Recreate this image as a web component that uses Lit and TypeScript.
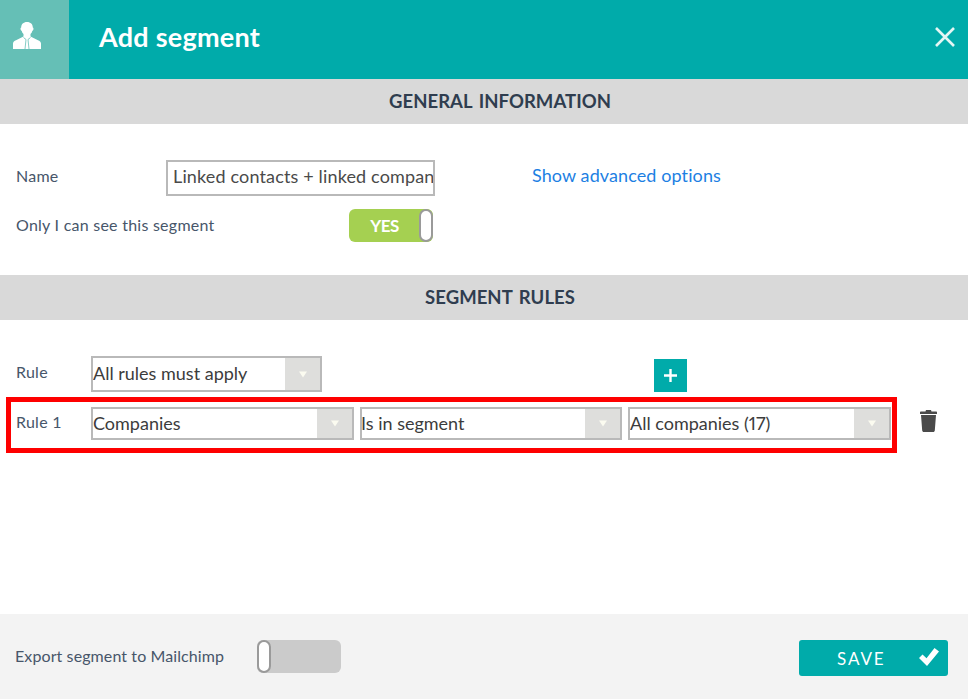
import { LitElement, html, css } from "lit";
import { customElement } from "lit/decorators.js";

const caret = html`<svg class="caret" width="8" height="7" viewBox="0 0 8 7"><path d="M0 0.5h8L4 6.5z" fill="#fbfbf0"/></svg>`;

@customElement("app-root")
export class AppRoot extends LitElement {
  static styles = css`
    :host { display: block; width: 968px; height: 699px; background: #fff; font-family: "Lato", "Open Sans", sans-serif; color: #3f4a5a; overflow: hidden; }
    * { box-sizing: border-box; }
    .page { display: flex; flex-direction: column; height: 699px; }
    .head { flex: none; height: 79px; background: #00abaa; display: flex; align-items: center; color: #fff; }
    .tile { width: 69px; height: 79px; background: #65bfb6; display: flex; align-items: center; padding: 0 0 8px 13px; }
    .tile svg { display: block; }
    .head h1 { margin: 0 0 6px 30px; font-size: 27px; line-height: 34px; font-weight: 700; flex: 1; letter-spacing: 0.25px; }
    .close { margin: 0 12px 6px 0; display: block; }
    .band { flex: none; height: 45px; background: #d9d9d9; display: flex; align-items: center; justify-content: center; padding: 0 0 2px 32px; font-size: 18.5px; font-weight: 700; color: #2f3d4f; letter-spacing: 0.05px; word-spacing: 2px; }
    .general { flex: none; height: 151px; padding: 36px 0 0 16px; }
    .line { display: flex; align-items: center; }
    .lab { font-size: 16px; color: #47566a; letter-spacing: 0.25px; }
    .name-lab { width: 150px; padding-bottom: 6px; }
    .input { width: 269px; height: 36px; border: 2px solid #b9b9b9; font-size: 18px; letter-spacing: 0.15px; color: #4a4a4a; padding: 0 0 0 5px; line-height: 28px; white-space: nowrap; overflow: hidden; }
    .link { margin-left: 97px; padding-bottom: 7px; font-size: 18px; letter-spacing: 0.1px; color: #1d7fe3; text-decoration: none; }
    .only { margin-top: 13px; }
    .only-lab { width: 333px; padding-bottom: 2px; }
    .toggle { width: 84px; height: 33px; border-radius: 6px; display: flex; align-items: center; flex: none; }
    .toggle.on { background: #a5d051; color: #fff; font-weight: 700; font-size: 17px; }
    .toggle.on span { flex: 1; text-align: center; letter-spacing: -0.5px; padding-left: 1px; }
    .toggle.off { background: #cbcbcb; }
    .knob { width: 14px; height: 33px; background: #fff; border: 2px solid #9a9a9a; border-radius: 7px; flex: none; }
    .rules { flex: 1; padding: 36px 0 0 6px; }
    .rule-top { display: flex; align-items: flex-start; padding-left: 10px; }
    .rule-lab { width: 75px; padding-top: 6px; }
    .sel { height: 36px; border: 2px solid #b9b9b9; display: flex; align-items: stretch; background: #fff; font-size: 18px; color: #3c3c3c; font-variant-numeric: proportional-nums; }
    .sel .txt { flex: 1; line-height: 30px; white-space: nowrap; overflow: hidden; }
    .sel .arrow { width: 35px; background: #dededc; display: flex; align-items: center; justify-content: center; flex: none; }
    .sel.top { width: 231px; }
    .plus { width: 33px; height: 33px; margin: 3px 0 0 332px; background: #00abaa; display: flex; align-items: center; justify-content: center; }
    .rule-row { width: 891px; height: 56px; margin-top: 5px; border: 5px solid #fe0000; display: flex; align-items: center; padding-left: 5px; position: relative; }
    .rule-row .rule-lab { width: 75px; padding-top: 0; margin-top: -7px; }
    .rule-row .sel { height: 33px; margin-top: -3px; }
    .rule-row .sel .txt { line-height: 28px; }
    .s1 { width: 263px; }
    .s2 { width: 262px; margin-left: 6px; }
    .s3 { width: 263px; margin-left: 6px; }
    .s2 .txt { margin-left: -1px; }
    .trash { position: absolute; left: 908px; top: 8px; display: block; }
    .foot { flex: none; height: 85px; background: #f3f3f3; display: flex; align-items: flex-start; padding: 26px 20px 0 15px; }
    .exp-lab { width: 242px; height: 33px; line-height: 31px; color: #47566a; letter-spacing: 0.1px; }
    .save { margin-left: auto; width: 149px; height: 36px; background: #00abaa; border-radius: 3px; color: #fff; font-size: 17px; letter-spacing: 1.9px; display: flex; align-items: center; padding-left: 38px; position: relative; }
    .check { position: absolute; left: 120px; top: 8px; display: block; }
  `;

  render() {
    return html`<div class="page">
      <header class="head">
        <div class="tile">
          <svg width="28" height="27" viewBox="0 0 28 27">
            <path fill="#fff" d="M14 0c3.700 0 5.800 2.300 5.800 5.500 .7.300.8 1 .6 2-.2.800-.6 1.200-1 1.300-.4 1.400-1 2.500-1.900 3.300v2.400l7.500 3.700c1.600.8 3 1.500 3 3.300V27H0v-5.500c0-1.800 1.400-2.500 3-3.300l7.500-3.700v-2.400c-.9-.8-1.500-1.900-1.900-3.300-.4-.1-.8-.5-1-1.300-.2-1-.1-1.700.6-2C8.200 2.300 10.300 0 14 0z"/>
            <path fill="none" stroke="#65bfb6" stroke-width="0.8" d="M10.500 15.500l2.500 2-1 9.500M17.500 15.500l-2.500 2 1 9.500"/>
          </svg>
        </div>
        <h1>Add segment</h1>
        <svg class="close" width="22" height="22" viewBox="0 0 22 22"><path d="M2 2l18 18M20 2L2 20" stroke="#e4f6f4" stroke-width="2.6" fill="none"/></svg>
      </header>
      <div class="band">GENERAL INFORMATION</div>
      <section class="general">
        <div class="line">
          <span class="lab name-lab">Name</span>
          <div class="input">Linked contacts + linked companies</div>
          <a class="link">Show advanced options</a>
        </div>
        <div class="line only">
          <span class="lab only-lab">Only I can see this segment</span>
          <div class="toggle on"><span>YES</span><div class="knob"></div></div>
        </div>
      </section>
      <div class="band">SEGMENT RULES</div>
      <section class="rules">
        <div class="rule-top">
          <span class="lab rule-lab">Rule</span>
          <div class="sel top"><span class="txt">All rules must apply</span><span class="arrow">${caret}</span></div>
          <div class="plus"><svg width="13" height="13" viewBox="0 0 13 13"><path d="M6.500 0v13M0 6.500h13" stroke="#fff" stroke-width="2.400"/></svg></div>
        </div>
        <div class="rule-row">
          <span class="lab rule-lab">Rule 1</span>
          <div class="sel s1"><span class="txt">Companies</span><span class="arrow">${caret}</span></div>
          <div class="sel s2"><span class="txt">Is in segment</span><span class="arrow">${caret}</span></div>
          <div class="sel s3"><span class="txt">All companies (17)</span><span class="arrow">${caret}</span></div>
          <svg class="trash" width="19" height="22" viewBox="0 0 19 22"><path fill="#4a4a4a" d="M7 0h5l.5 1.500h4.500c.6 0 1 .4 1 1V4H1V2.500c0-.6.4-1 1-1h4.500zM2 5h15l-1.200 15.500c-.1.900-.7 1.500-1.600 1.500H4.800c-.9 0-1.500-.6-1.600-1.500z"/></svg>
        </div>
      </section>
      <footer class="foot">
        <span class="lab exp-lab">Export segment to Mailchimp</span>
        <div class="toggle off"><div class="knob"></div></div>
        <div class="save">SAVE
          <svg class="check" width="20" height="18" viewBox="0 0 20 18"><path d="M0 10l3.500-3.500 4 3.700L15.500 0 20 3.500 8 18z" fill="#fff"/></svg>
        </div>
      </footer>
    </div>`;
  }
}
